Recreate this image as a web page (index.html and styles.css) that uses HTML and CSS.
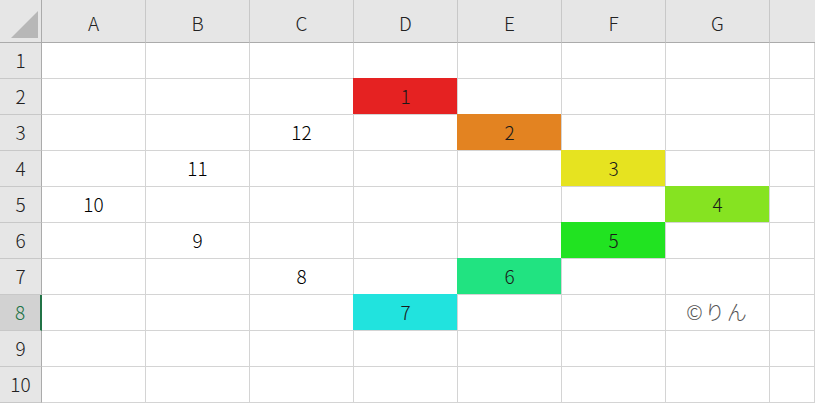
FILE: index.html
```html
<!DOCTYPE html>
<html lang="ja">
<head>
<meta charset="utf-8">
<link rel="stylesheet" href="styles.css">
</head>
<body>
<div class="sheet">
  <div class="corner"><span class="tri"></span></div>
  <div class="colh">A</div><div class="colh">B</div><div class="colh">C</div><div class="colh">D</div><div class="colh">E</div><div class="colh">F</div><div class="colh">G</div><div class="colh fill"></div>

  <div class="rowh">1</div><div class="c"></div><div class="c"></div><div class="c"></div><div class="c"></div><div class="c"></div><div class="c"></div><div class="c"></div><div class="c"></div>

  <div class="rowh">2</div><div class="c"></div><div class="c"></div><div class="c"></div><div class="c red">1</div><div class="c"></div><div class="c"></div><div class="c"></div><div class="c"></div>

  <div class="rowh">3</div><div class="c"></div><div class="c"></div><div class="c">12</div><div class="c"></div><div class="c orange">2</div><div class="c"></div><div class="c"></div><div class="c"></div>

  <div class="rowh">4</div><div class="c"></div><div class="c">11</div><div class="c"></div><div class="c"></div><div class="c"></div><div class="c yellow">3</div><div class="c"></div><div class="c"></div>

  <div class="rowh">5</div><div class="c">10</div><div class="c"></div><div class="c"></div><div class="c"></div><div class="c"></div><div class="c"></div><div class="c lime">4</div><div class="c"></div>

  <div class="rowh">6</div><div class="c"></div><div class="c">9</div><div class="c"></div><div class="c"></div><div class="c"></div><div class="c green">5</div><div class="c"></div><div class="c"></div>

  <div class="rowh">7</div><div class="c"></div><div class="c"></div><div class="c">8</div><div class="c"></div><div class="c mint">6</div><div class="c"></div><div class="c"></div><div class="c"></div>

  <div class="rowh active">8</div><div class="c"></div><div class="c"></div><div class="c"></div><div class="c cyan">7</div><div class="c"></div><div class="c"></div><div class="c credit">©りん</div><div class="c"></div>

  <div class="rowh">9</div><div class="c"></div><div class="c"></div><div class="c"></div><div class="c"></div><div class="c"></div><div class="c"></div><div class="c"></div><div class="c"></div>

  <div class="rowh">10</div><div class="c"></div><div class="c"></div><div class="c"></div><div class="c"></div><div class="c"></div><div class="c"></div><div class="c"></div><div class="c"></div>
</div>
</body>
</html>
```
FILE: styles.css
```css
html, body {
  margin: 0;
  padding: 0;
  background: #ffffff;
  overflow: hidden;
}

.sheet {
  display: grid;
  grid-template-columns: 42px repeat(7, 104px) 1fr;
  grid-template-rows: 43px repeat(10, 36px);
  width: 815px;
  font-family: "Noto Sans CJK JP", "Noto Sans", sans-serif;
  font-size: 19px;
  font-weight: 300;
  color: #000;
}

.sheet > div {
  box-sizing: border-box;
  display: flex;
  align-items: center;
  justify-content: center;
}

.corner {
  background: #e6e6e6;
  border-right: 1px solid #ababab;
  border-bottom: 1px solid #ababab;
  position: relative;
}

.tri {
  position: absolute;
  left: 11px;
  top: 11px;
  width: 27px;
  height: 27px;
  background: #b7b7b7;
  clip-path: polygon(100% 0, 100% 100%, 0 100%);
}

.colh {
  background: #e6e6e6;
  border-right: 1px solid #c8c8c8;
  border-bottom: 1px solid #ababab;
  color: #222;
  padding-top: 2px;
}

.colh.fill {
  border-right: none;
}

.rowh {
  background: #e6e6e6;
  border-right: 1px solid #ababab;
  border-bottom: 1px solid #c8c8c8;
  color: #222;
  padding-bottom: 2px;
}

.rowh.active {
  background: #d2d2d2;
  color: #217346;
  border-right: 2px solid #217346;
}

.c {
  border-right: 1px solid #d4d4d4;
  border-bottom: 1px solid #d4d4d4;
  padding-bottom: 3px;
}

.red    { background: #e52222; box-shadow: -1px -1px 0 #e52222; }
.orange { background: #e38321; box-shadow: -1px -1px 0 #e38321; }
.yellow { background: #e6e320; box-shadow: -1px -1px 0 #e6e320; }
.lime   { background: #86e321; box-shadow: -1px -1px 0 #86e321; }
.green  { background: #21e321; box-shadow: -1px -1px 0 #21e321; }
.mint   { background: #21e381; box-shadow: -1px -1px 0 #21e381; }
.cyan   { background: #21e3de; box-shadow: -1px -1px 0 #21e3de; }

.red, .orange, .yellow, .lime, .green, .mint, .cyan {
  color: #1a1a1a;
}

.credit {
  color: #555;
  font-size: 20px;
  letter-spacing: 2px;
}
```
